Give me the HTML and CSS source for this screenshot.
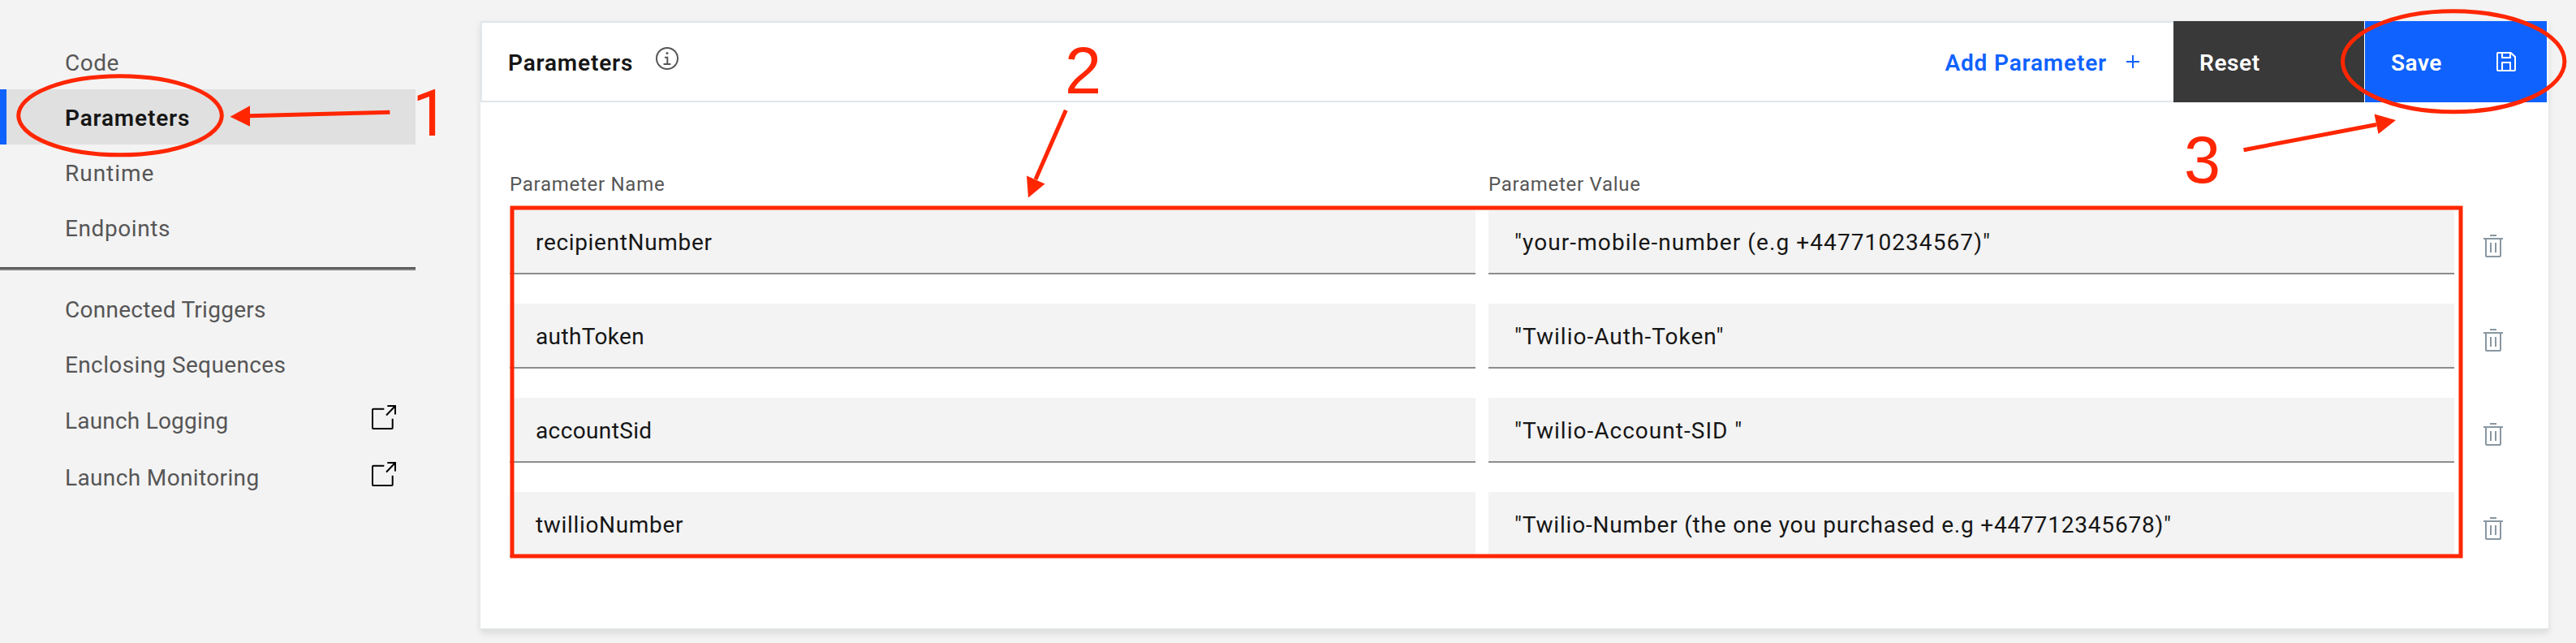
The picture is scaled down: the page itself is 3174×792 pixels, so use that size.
FILE: index.html
```html
<!DOCTYPE html>
<html lang="en">
<head>
<meta charset="utf-8">
<title>Parameters</title>
<link rel="stylesheet" href="styles.css">
</head>
<body>
<svg class="sprite" aria-hidden="true">
  <symbol id="trash" viewBox="0 0 24 28">
    <path d="M8 1h8M0 5h24M3 5v21a1 1 0 0 0 1 1h16a1 1 0 0 0 1-1V5M9 10v12M15 10v12"/>
  </symbol>
  <symbol id="launch" viewBox="0 0 30 30">
    <path d="M15.300 4.700H2a1 1 0 0 0-1 1V28a1 1 0 0 0 1 1h22.700a1 1 0 0 0 1-1V16.700M19.300 1H29v10.500M29 1 18 12.500"/>
  </symbol>
</svg>
<div class="app">
  <nav class="sidebar">
    <a class="nav-item ls-50">Code</a>
    <a class="nav-item nav-item--active ls-84">Parameters</a>
    <a class="nav-item ls-97">Runtime</a>
    <a class="nav-item ls-59">Endpoints</a>
    <hr class="nav-divider">
    <a class="nav-item ls-26">Connected Triggers</a>
    <a class="nav-item ls-37">Enclosing Sequences</a>
    <a class="nav-item nav-item--launch ls-20">Launch Logging <svg class="launch-icon"><use href="#launch"/></svg></a>
    <a class="nav-item nav-item--launch ls-37">Launch Monitoring <svg class="launch-icon"><use href="#launch"/></svg></a>
  </nav>
  <main class="card">
    <header class="card-header">
      <div class="toolbar">
        <h1 class="title ls-84">Parameters</h1>
        <svg class="info-icon" viewBox="0 0 28 28"><circle cx="14" cy="14" r="13"/><path d="M11 12.700h3.300V21M9.600 21h8.800"/><circle class="info-dot" cx="14" cy="7.500" r="1.500"/></svg>
        <a class="add-link ls-84">Add Parameter <svg class="plus-icon" viewBox="0 0 16 16"><path d="M8 0v16M0 8h16"/></svg></a>
      </div>
      <button class="btn btn--reset ls-59">Reset</button>
      <button class="btn btn--save ls-50">Save <svg class="save-icon" viewBox="0 0 24 24"><path d="M2 1h15.600L23 6v16a1 1 0 0 1-1 1H2a1 1 0 0 1-1-1V2a1 1 0 0 1 1-1ZM7 1v6h10V1M7 23V13h10v10"/></svg></button>
    </header>
    <section class="params">
      <div class="row row--labels">
        <span class="label ls-73">Parameter Name</span>
        <span class="label ls-73">Parameter Value</span>
      </div>
      <div class="row">
        <div class="field ls-67">recipientNumber</div>
        <div class="field ls-109">"your-mobile-number (e.g +447710234567)"</div>
        <svg class="trash-icon"><use href="#trash"/></svg>
      </div>
      <div class="row">
        <div class="field ls-37">authToken</div>
        <div class="field ls-102">"Twilio-Auth-Token"</div>
        <svg class="trash-icon"><use href="#trash"/></svg>
      </div>
      <div class="row">
        <div class="field ls-37">accountSid</div>
        <div class="field ls-102">"Twilio-Account-SID "</div>
        <svg class="trash-icon"><use href="#trash"/></svg>
      </div>
      <div class="row">
        <div class="field ls-67">twillioNumber</div>
        <div class="field ls-81">"Twilio-Number (the one you purchased e.g +447712345678)"</div>
        <svg class="trash-icon"><use href="#trash"/></svg>
      </div>
    </section>
  </main>
</div>
<svg class="annotations" viewBox="0 0 3174 792">
  <g class="mark-line">
    <ellipse cx="148" cy="142.300" rx="125.300" ry="48.500"/>
    <path d="M480.400 138.300 306 142.800"/>
    <path d="M1313.300 135.700 1276 221"/>
    <rect x="631" y="256" width="2401" height="429"/>
    <ellipse cx="3023.200" cy="75.800" rx="136.700" ry="62"/>
    <path d="M2764.500 184.700 2928 153.500"/>
  </g>
  <g class="mark-fill">
    <path d="M283.500 143.700 308 130.300V155.700Z"/>
    <path d="M1267 243.500 1265 216.500 1287.500 226.500Z"/>
    <path d="M2952 148 2925.500 140.500 2930.500 165Z"/>
    <text class="digit-one" x="508" y="167">1</text>
    <text class="digit" x="1312" y="115">2</text>
    <text class="digit" x="2691" y="225">3</text>
  </g>
</svg>
</body>
</html>
```
FILE: styles.css
```css
* { box-sizing: border-box; }

body {
  margin: 0;
  background: #f3f3f3;
  font-family: Roboto, "Liberation Sans", sans-serif;
  font-size: 28px;
  color: #161616;
}

svg { display: block; flex: none; fill: none; stroke-width: 2; }
.sprite { position: absolute; width: 0; height: 0; }

.app {
  position: relative;
  display: flex;
  gap: 80px;
  width: 3174px;
  height: 792px;
  overflow: hidden;
}

/* Tracking steps, in hundredths of a pixel */
.ls-20 { letter-spacing: .2px; }
.ls-26 { letter-spacing: .26px; }
.ls-37 { letter-spacing: .37px; }
.ls-50 { letter-spacing: .5px; }
.ls-59 { letter-spacing: .59px; }
.ls-67 { letter-spacing: .67px; }
.ls-73 { letter-spacing: .73px; }
.ls-81 { letter-spacing: .81px; }
.ls-84 { letter-spacing: .84px; }
.ls-97 { letter-spacing: .97px; }
.ls-102 { letter-spacing: 1.02px; }
.ls-109 { letter-spacing: 1.09px; }

/* Sidebar */
.sidebar { width: 512px; flex: none; padding-top: 42px; }
.nav-item {
  display: flex;
  align-items: center;
  justify-content: space-between;
  height: 68px;
  padding: 3px 24px 0 80px;
  color: #565656;
}
.nav-item--active {
  padding-left: 72px;
  border-left: 8px solid #0f62fe;
  background: #e0e0e0;
  color: #161616;
  font-weight: 600;
}
.nav-item--launch { height: 70px; }
.nav-divider {
  height: 4px;
  margin: 15px 0 13px;
  border: 0;
  border-top: 2px solid #565656;
  background: #808080;
}
.launch-icon { width: 30px; height: 30px; margin-bottom: 9px; stroke: #000; }

/* Card */
.card {
  width: 2548px;
  height: 750px;
  margin-top: 26px;
  flex: none;
  background: #fff;
  border-bottom: 2px solid #dfe3e6;
  box-shadow: 0 4px 8px rgba(0, 0, 0, .1);
}
.card-header { display: flex; height: 100px; padding-right: 2px; }
.toolbar {
  display: flex;
  align-items: center;
  flex: 1;
  padding: 3px 42px 0 32px;
  border: 2px solid #dfe6eb;
  border-right: 0;
}
.title { margin: 0; font-size: 28px; font-weight: 600; }
.info-icon { width: 28px; height: 28px; margin: 0 0 11px 28px; stroke: #565656; }
.info-dot { fill: #565656; stroke: none; }
.add-link {
  display: flex;
  align-items: center;
  gap: 24px;
  margin-left: auto;
  color: #0f62fe;
  font-weight: 600;
}
.plus-icon { width: 16px; height: 16px; margin-bottom: 3px; stroke: #0f62fe; }
.btn {
  display: flex;
  align-items: center;
  justify-content: space-between;
  height: 100px;
  border: 0;
  color: #fff;
  font-family: inherit;
  font-size: 28px;
  font-weight: 600;
}
.btn--reset { width: 235px; padding: 3px 32px 0; margin-right: 1px; background: #393939; }
.btn--save { width: 224px; padding: 3px 38px 0 32px; background: #0f62fe; }
.save-icon { width: 24px; height: 24px; margin-bottom: 3px; stroke: #fff; }

/* Parameter rows */
.params { padding: 85px 56px 0 36px; }
.row {
  display: grid;
  grid-template-columns: 1190px 1190px 24px;
  column-gap: 16px;
  align-items: center;
  height: 80px;
  margin-bottom: 36px;
}
.row--labels { height: 32px; margin-bottom: 15px; }
.label { color: #565656; font-size: 24px; line-height: 32px; }
.field {
  display: flex;
  align-items: center;
  height: 80px;
  padding: 3px 32px 0;
  border-bottom: 2px solid #8d8d8d;
  background: #f3f3f3;
  white-space: pre;
}
.trash-icon { width: 24px; height: 28px; margin: 10px 0 0 20px; stroke: #8897a2; }

/* Red callouts drawn over the page */
.annotations { position: absolute; top: 0; left: 0; width: 3174px; height: 792px; }
.mark-line { stroke: #ff2600; stroke-width: 5; }
.mark-fill { fill: #ff2600; }
.digit { font: 81px "Liberation Sans", sans-serif; }
.digit-one { font: 79px Roboto, sans-serif; }
```
